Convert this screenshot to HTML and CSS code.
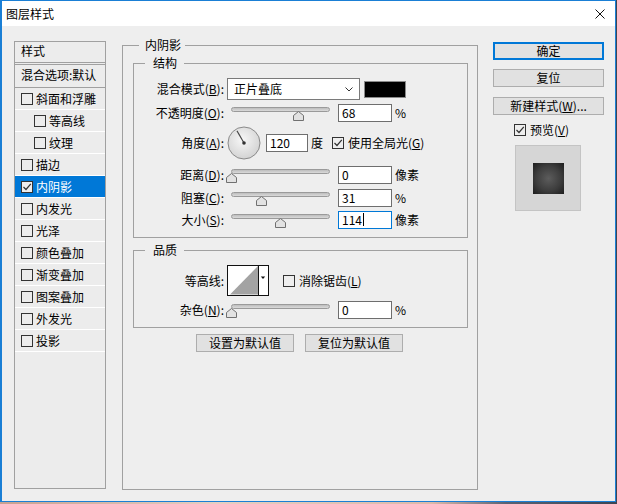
FILE: index.html
```html
<!DOCTYPE html>
<html lang="zh-CN">
<head>
  <meta charset="UTF-8">
  <title>图层样式</title>
  <link rel="stylesheet" href="styles.css">
</head>
<body>
  <div class="window">
    <div class="titlebar">
      <span class="title">图层样式</span>
      <svg class="close" width="10" height="10" viewBox="0 0 10 10"><path d="M0.5 0.5L9.5 9.5M9.5 0.5L0.5 9.5" stroke="#111" stroke-width="1"/></svg>
    </div>

    <div class="content">
      <!-- 左侧样式列表 -->
      <div class="styles-list">
        <div class="list-head">样式</div>
        <div class="list-row blend">混合选项:默认</div>
        <div class="list-row"><span class="cb"></span>斜面和浮雕</div>
        <div class="list-row sub"><span class="cb"></span>等高线</div>
        <div class="list-row sub"><span class="cb"></span>纹理</div>
        <div class="list-row"><span class="cb"></span>描边</div>
        <div class="list-row active"><span class="cb"><svg width="10" height="10" viewBox="0 0 10 10"><path d="M1.5 5L4 7.5L8.8 1.8" fill="none" stroke="#333" stroke-width="1.2"/></svg></span>内阴影</div>
        <div class="list-row"><span class="cb"></span>内发光</div>
        <div class="list-row"><span class="cb"></span>光泽</div>
        <div class="list-row"><span class="cb"></span>颜色叠加</div>
        <div class="list-row"><span class="cb"></span>渐变叠加</div>
        <div class="list-row"><span class="cb"></span>图案叠加</div>
        <div class="list-row"><span class="cb"></span>外发光</div>
        <div class="list-row"><span class="cb"></span>投影</div>
      </div>

      <!-- 内阴影设置 -->
      <fieldset class="group main">
        <legend>内阴影</legend>

        <fieldset class="group sub-group structure">
          <legend>结构</legend>

          <div class="row r-blend">
            <span class="lbl">混合模式(<u>B</u>):</span>
            <div class="select">
              <span>正片叠底</span>
              <svg width="8" height="5" viewBox="0 0 8 5"><path d="M0.5 0.5L4 4L7.5 0.5" fill="none" stroke="#333"/></svg>
            </div>
            <div class="swatch"></div>
          </div>

          <div class="row r-opacity">
            <span class="lbl">不透明度(<u>O</u>):</span>
            <div class="slider">
              <div class="rail">
                <div class="track"></div>
                <svg class="thumb" style="left: 68%" width="11" height="10" viewBox="0 0 11 10"><path d="M5.5 0.5L10.5 4.5V9.5H0.5V4.5Z" fill="#e2e2e2" stroke="#707070"/></svg>
              </div>
            </div>
            <div class="num">68</div>
            <span class="unit">%</span>
          </div>

          <div class="row r-angle">
            <span class="lbl">角度(<u>A</u>):</span>
            <svg class="dial" width="34" height="34" viewBox="0 0 34 34">
              <defs>
                <radialGradient id="dialFill" cx="45%" cy="40%" r="65%">
                  <stop offset="0" stop-color="#f7f7f7"/>
                  <stop offset="1" stop-color="#d0d0d0"/>
                </radialGradient>
              </defs>
              <circle cx="17" cy="17" r="16" fill="url(#dialFill)" stroke="#8a8a8a"/>
              <line x1="17" y1="17" x2="10" y2="4.9" stroke="#444" stroke-width="1.1"/>
              <circle cx="17" cy="17" r="1.8" fill="#333"/>
            </svg>
            <div class="num angle">120</div>
            <span class="unit">度</span>
            <span class="cb global"><svg width="10" height="10" viewBox="0 0 10 10"><path d="M1.5 5L4 7.5L8.8 1.8" fill="none" stroke="#333" stroke-width="1.2"/></svg></span>
            <span class="cb-text">使用全局光(<u>G</u>)</span>
          </div>

          <div class="row r-slider">
            <span class="lbl">距离(<u>D</u>):</span>
            <div class="slider">
              <div class="rail">
                <div class="track"></div>
                <svg class="thumb" style="left: 0%" width="11" height="10" viewBox="0 0 11 10"><path d="M5.5 0.5L10.5 4.5V9.5H0.5V4.5Z" fill="#e2e2e2" stroke="#707070"/></svg>
              </div>
            </div>
            <div class="num">0</div>
            <span class="unit">像素</span>
          </div>

          <div class="row r-slider">
            <span class="lbl">阻塞(<u>C</u>):</span>
            <div class="slider">
              <div class="rail">
                <div class="track"></div>
                <svg class="thumb" style="left: 31%" width="11" height="10" viewBox="0 0 11 10"><path d="M5.5 0.5L10.5 4.5V9.5H0.5V4.5Z" fill="#e2e2e2" stroke="#707070"/></svg>
              </div>
            </div>
            <div class="num">31</div>
            <span class="unit">%</span>
          </div>

          <div class="row r-size">
            <span class="lbl">大小(<u>S</u>):</span>
            <div class="slider">
              <div class="rail">
                <div class="track"></div>
                <svg class="thumb" style="left: 49.5%" width="11" height="10" viewBox="0 0 11 10"><path d="M5.5 0.5L10.5 4.5V9.5H0.5V4.5Z" fill="#e2e2e2" stroke="#707070"/></svg>
              </div>
            </div>
            <div class="num focus">114<span class="caret"></span></div>
            <span class="unit">像素</span>
          </div>
        </fieldset>

        <fieldset class="group sub-group quality">
          <legend>品质</legend>

          <div class="row r-contour">
            <span class="lbl">等高线:</span>
            <svg class="contour" width="42" height="31" viewBox="0 0 42 31">
              <rect x="0.5" y="0.5" width="41" height="30" fill="#fff" stroke="#111"/>
              <path d="M3 29.5L31 1V29.5Z" fill="#a3a3a3"/>
              <line x1="31.5" y1="1" x2="31.5" y2="30" stroke="#111"/>
              <path d="M33.8 11.5H38.2L36 14Z" fill="#111"/>
            </svg>
            <span class="cb aa"></span>
            <span class="cb-text">消除锯齿(<u>L</u>)</span>
          </div>

          <div class="row r-noise">
            <span class="lbl">杂色(<u>N</u>):</span>
            <div class="slider">
              <div class="rail">
                <div class="track"></div>
                <svg class="thumb" style="left: 0%" width="11" height="10" viewBox="0 0 11 10"><path d="M5.5 0.5L10.5 4.5V9.5H0.5V4.5Z" fill="#e2e2e2" stroke="#707070"/></svg>
              </div>
            </div>
            <div class="num">0</div>
            <span class="unit">%</span>
          </div>
        </fieldset>

        <div class="defaults">
          <button class="btn">设置为默认值</button>
          <button class="btn">复位为默认值</button>
        </div>
      </fieldset>

      <!-- 右侧按钮 -->
      <div class="side">
        <button class="btn primary">确定</button>
        <button class="btn reset">复位</button>
        <button class="btn new">新建样式(<u>W</u>)...</button>
        <div class="preview-check">
          <span class="cb"><svg width="10" height="10" viewBox="0 0 10 10"><path d="M1.5 5L4 7.5L8.8 1.8" fill="none" stroke="#333" stroke-width="1.2"/></svg></span>
          <span>预览(<u>V</u>)</span>
        </div>
        <div class="preview">
          <div class="preview-square"></div>
        </div>
      </div>
    </div>
  </div>
</body>
</html>
```

FILE: styles.css
```css
* {
  box-sizing: border-box;
}

body {
  margin: 0;
  width: 617px;
  height: 504px;
  overflow: hidden;
  background: linear-gradient(90deg, #c8a190 0%, #e6cfc2 35%, #dcb9a9 70%, #5a6272 82%, #3d4553 100%);
  font-family: "Noto Sans CJK SC", sans-serif;
  font-size: 12px;
  color: #000;
}

u {
  text-decoration: underline;
  text-underline-offset: 1px;
}

.window {
  width: 616px;
  height: 502px;
  border: 1px solid #1a7fd5;
  border-left-width: 2px;
  background: #eeeeee;
  display: flex;
  flex-direction: column;
}

.titlebar {
  height: 25px;
  flex: none;
  background: #ffffff;
  display: flex;
  align-items: center;
  justify-content: space-between;
  padding: 0 10px 0 4px;
  line-height: 14px;
}

.close {
  display: block;
}

.content {
  flex: 1;
  display: flex;
  align-items: flex-start;
  padding-left: 12px;
}

/* 样式列表 */
.styles-list {
  margin-top: 15px;
  width: 92px;
  height: 448px;
  border: 1px solid #a0a0a0;
  background: #ececec;
}

.list-head {
  height: 23px;
  line-height: 17px;
  padding-left: 6px;
  border-bottom: 3px double #a0a0a0;
}

.list-row {
  height: 22px;
  display: flex;
  align-items: center;
  padding-left: 6px;
  border-bottom: 1px solid #ffffff;
  white-space: nowrap;
  line-height: 14px;
}

.list-row.blend {
  height: 23px;
  border-bottom-color: #a0a0a0;
  padding-bottom: 3px;
}

.list-row.sub {
  padding-left: 19px;
}

.list-row.active {
  background: #0078d7;
  color: #ffffff;
}

.list-row.active .cb {
  background: #eeeeee;
}

.cb {
  width: 12px;
  height: 12px;
  flex: none;
  border: 1px solid #333333;
  margin-right: 3px;
  display: flex;
  align-items: center;
  justify-content: center;
}

.cb svg {
  display: block;
}

/* 分组框 */
.group {
  margin: 0;
  border: 1px solid #a0a0a0;
  min-width: 0;
}

.group legend {
  line-height: 14px;
  font-size: 12px;
}

.main {
  margin: 12px 0 0 16px;
  width: 356px;
  height: 452px;
  padding: 0 9px 0 10px;
}

.main > legend {
  margin-left: 6px;
  padding: 0 4px 0 6px;
}

.sub-group {
  padding: 0;
}

.sub-group > legend {
  margin-left: 11px;
  padding: 0 7px 0 8px;
}

.structure {
  margin-top: 4px;
  padding: 6px 0 7px;
}

.quality {
  margin-top: 5px;
  padding: 4px 0 8px;
}

.row {
  display: flex;
  align-items: center;
  line-height: 14px;
  white-space: nowrap;
}

.lbl {
  width: 90px;
  flex: none;
  text-align: right;
  margin-right: 3px;
}

.r-blend { height: 26px; }
.r-opacity { height: 21px; }
.r-angle { height: 40px; }
.r-slider { height: 23px; }
.r-size { height: 21px; }
.r-contour { height: 39px; }
.r-noise { height: 19px; }

.select {
  width: 133px;
  height: 22px;
  border: 1px solid #7a7a7a;
  background: #ffffff;
  display: flex;
  align-items: center;
  justify-content: space-between;
  padding: 0 6px 0 6px;
}

.select svg {
  display: block;
}

.swatch {
  width: 42px;
  height: 17px;
  margin-left: 4px;
  border: 1px solid #8a8a8a;
  background: #000000;
}

.slider {
  width: 107px;
  height: 17px;
  flex: none;
  padding: 0 4px;
}

.rail {
  position: relative;
  height: 17px;
}

.track {
  margin-top: 3px;
  height: 5px;
  border: 1px solid #9a9a9a;
  border-radius: 3px;
  background: linear-gradient(#bdbdbd, #dadada);
}

.thumb {
  position: absolute;
  top: 4px;
  margin-left: -5.5px;
  display: block;
}

.num {
  width: 54px;
  height: 18px;
  margin-left: 4px;
  border: 1px solid #6e6e6e;
  background: #ffffff;
  padding-left: 3px;
  display: flex;
  align-items: center;
  flex: none;
}

.num.focus {
  border-color: #0078d7;
}

.caret {
  width: 1px;
  height: 13px;
  background: #000000;
  margin-left: 1px;
}

.unit {
  margin-left: 3px;
}

.dial {
  display: block;
  margin-left: 0;
  flex: none;
}

.num.angle {
  width: 42px;
  margin-left: 5px;
}

.cb.global {
  margin-left: 9px;
}

.cb-text {
  margin-left: 1px;
}

.contour {
  display: block;
  flex: none;
}

.cb.aa {
  margin-left: 14px;
}

.defaults {
  display: flex;
  gap: 11px;
  margin-top: 6px;
  padding-left: 63px;
}

/* 按钮 */
.btn {
  font-family: inherit;
  font-size: 12px;
  line-height: 14px;
  color: #000000;
  height: 18px;
  padding: 0;
  border: 1px solid #adadad;
  background: #e1e1e1;
  text-align: center;
}

.defaults .btn {
  width: 98px;
}

.side {
  margin: 16px 0 0 15px;
  width: 111px;
  display: flex;
  flex-direction: column;
}

.side .btn {
  width: 111px;
}

.btn.primary {
  border: 2px solid #0078d7;
}

.btn.reset {
  margin-top: 9px;
}

.btn.new {
  margin-top: 10px;
}

.preview-check {
  margin: 6px 0 0 21px;
  height: 18px;
  display: flex;
  align-items: center;
  line-height: 14px;
}

.preview-check .cb {
  margin-right: 4px;
}

.preview {
  margin: 6px 0 0 22px;
  width: 66px;
  height: 66px;
  border: 1px solid #c4c4c4;
  background: #d6d6d6;
  display: flex;
  align-items: center;
  justify-content: center;
  padding-top: 1px;
}

.preview-square {
  width: 31px;
  height: 31px;
  background: radial-gradient(circle, #5c5c5c 0%, #3e3e3e 55%, #1d1d1d 100%);
}
```
